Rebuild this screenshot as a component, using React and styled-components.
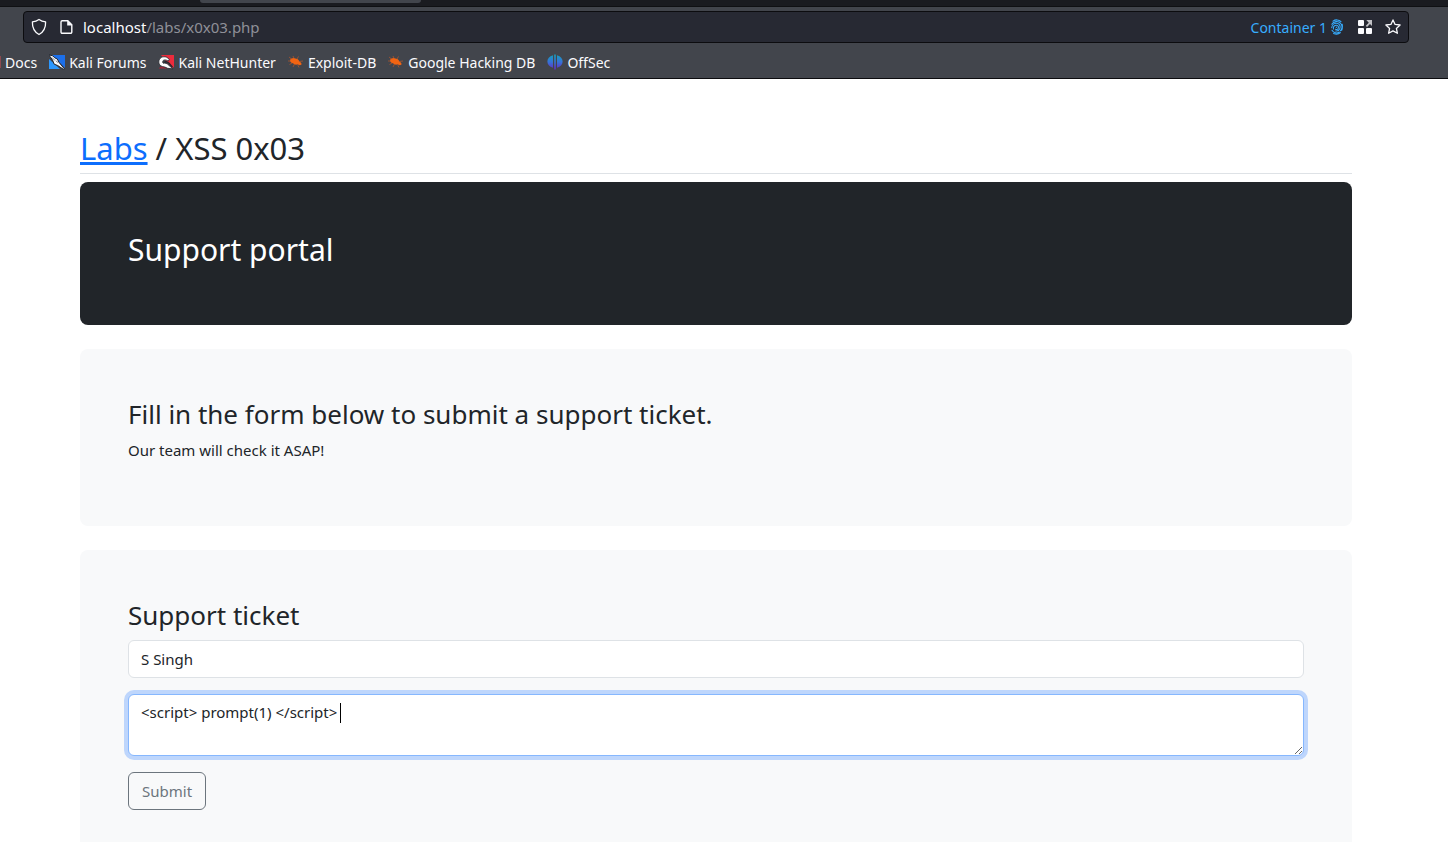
import React from "react";
import styled, { createGlobalStyle } from "styled-components";

const Global = createGlobalStyle`
  *, *::before, *::after { box-sizing: border-box; }
  body {
    margin: 0;
    background: #fff;
    color: #212529;
    font-family: "Noto Sans", "Open Sans", sans-serif;
    font-size: 15px;
    line-height: 23px;
  }
  h1, h2, p { margin: 0; font-weight: 400; }
`;

const Window = styled.div`
  display: flex;
  flex-direction: column;
  height: 100vh;
  overflow: hidden;
`;

const Chrome = styled.header`
  flex: none;
  background: #42454c;
  border-bottom: 1px solid #0c0c0f;
  font-size: 14px;
`;

const TabStrip = styled.div`
  height: 7px;
  padding-left: 200px;
  background: #1a1b20;
  border-bottom: 1px solid #0f1013;
`;

const ActiveTab = styled.div`
  width: 221px;
  height: 3px;
  background: #42454c;
  border-radius: 0 0 4px 4px;
`;

const AddressBar = styled.div`
  display: flex;
  align-items: center;
  height: 32px;
  margin: 4px 39px 4px 23px;
  padding: 0 7px;
  background: #272933;
  border: 1px solid #0c0c0f;
  border-radius: 4px;
`;

const IconGroup = styled.div`
  display: flex;
  align-items: center;
  gap: 12px;
`;

const Address = styled.div`
  flex: 1;
  margin-left: 10px;
  color: #8f9098;
  font-size: 15px;
  white-space: nowrap;
`;

const Host = styled.span`
  color: #fbfbfe;
`;

const IconButton = styled.button`
  display: flex;
  flex: none;
  padding: 0;
  border: 0;
  background: none;
`;

const Container = styled.div`
  display: flex;
  align-items: center;
  gap: 4px;
  margin-right: 14px;
  color: #37adff;
`;

const Bookmarks = styled.nav`
  display: flex;
  align-items: center;
  gap: 12px;
  height: 31px;
  padding-bottom: 1px;
  white-space: nowrap;
`;

const Bookmark = styled.a`
  display: flex;
  align-items: center;
  gap: 4px;
  color: #fbfbfe;
  text-decoration: none;
`;

const DocsMark = styled.span`
  width: 1px;
  height: 12px;
  background: #8c4a50;
`;

const Page = styled.main`
  flex: 1;
  min-height: 0;
  overflow: auto;
  scrollbar-width: none;
  padding: 48px 96px 0 80px;
`;

const Title = styled.h1`
  margin-bottom: 8px;
  padding: 2px 0 6px;
  border-bottom: 1px solid #dee2e6;
  font-size: 31px;
  line-height: 38px;
`;

const LabsLink = styled.a`
  color: #0d6efd;
  text-decoration: underline;
`;

const Panel = styled.section`
  margin-bottom: 24px;
  padding: 48px;
  border-radius: 8px;
  background: ${(p) => (p.$dark ? "#212529" : "#f8f9fa")};
  color: ${(p) => (p.$dark ? "#fff" : "#212529")};
`;

const Heading = styled.h2`
  margin-bottom: 8px;
  font-size: ${(p) => (p.$large ? 30 : 26)}px;
  line-height: ${(p) => (p.$large ? 39 : 34)}px;
`;

const Lead = styled.p`
  margin-bottom: 16px;
`;

const Field = styled.div`
  position: relative;
  margin-bottom: 16px;
`;

const fieldStyle = `
  display: block;
  width: 100%;
  padding: 6px 12px;
  border: 1px solid #dee2e6;
  border-radius: 6px;
  outline: 0;
  background: #fff;
  color: #212529;
  font: inherit;
`;

const TextInput = styled.input`
  ${fieldStyle}
  height: 38px;
`;

const TextArea = styled.textarea`
  ${fieldStyle}
  height: 62px;
  resize: vertical;
  border-color: #86b7fe;
  box-shadow: 0 0 0 4px #bed6fc;
`;

const Caret = styled.span`
  position: absolute;
  top: 9px;
  left: 212px;
  width: 1px;
  height: 20px;
  background: #000;
`;

const Submit = styled.button`
  display: block;
  height: 38px;
  padding: 0 13px;
  border: 1px solid #6c757d;
  border-radius: 6px;
  background: transparent;
  color: #6c757d;
  font: inherit;
`;

const Shield = () => (
  <svg width="16" height="18" viewBox="0 0 16 18" fill="none" stroke="#fbfbfe" strokeWidth="1.3" strokeLinejoin="round">
    <path d="M8 1.500c2 1.400 4.200 2.100 6.600 2.400.2 5.300-1.600 9.700-6.600 12.600C3 13.600 1.200 9.200 1.400 3.900 3.800 3.600 6 2.900 8 1.500z" />
  </svg>
);

const Doc = () => (
  <svg width="14" height="16" viewBox="0 0 14 16">
    <path d="M3.200 1.700h5.600l4 4v7.400a1.200 1.200 0 0 1-1.200 1.200H3.200A1.200 1.200 0 0 1 2 13.100V2.900a1.200 1.200 0 0 1 1.200-1.200z" fill="none" stroke="#fbfbfe" strokeWidth="1.400" />
    <path d="M8.200 1.500v5h5z" fill="#fbfbfe" />
  </svg>
);

const Fingerprint = () => (
  <svg width="12" height="16" viewBox="0 0 12 16" fill="none" stroke="#37adff" strokeWidth="1.050" strokeLinecap="round">
    <path d="M2 2.200C4.400.3 8 .5 10 2.600M.8 5.300C2.500 2.200 7.300 1.600 9.600 4.300c1.800 2.300 1.500 5.500-.2 7.500M.7 8.700C1 5.800 3.400 4 5.800 4.200c3 .3 3.900 3.200 2.900 5.600-.8 1.800-2.200 2.500-4 2.200M2.500 10C1.900 7.800 3.700 6 5.500 6.200c2 .2 2.300 2.200 1.500 3.500-.6 1-1.800 1.100-2.500.5M5.300 8.100v.4M1 11.300c1.500 2.800 5 3.400 7.300 1.700M2.600 14.500c2.300 1.100 5 .8 6.900-.8M11.200 5.200c.4 2 .3 4-.5 6" />
  </svg>
);

const Grid = () => (
  <svg width="16" height="16" viewBox="0 0 16 16" fill="#fbfbfe">
    <rect x="1" y="1" width="6" height="6" rx="1" />
    <rect x="1" y="9" width="6" height="6" rx="1" />
    <rect x="9" y="9" width="6" height="6" rx="1" />
    <path d="M9.300 1H15v6l-2-2-3 3-1.200-1.200 3-3z" fill="#c1c1c5" />
  </svg>
);

const Star = () => (
  <svg width="16" height="16" viewBox="0 0 16 16" fill="none" stroke="#fbfbfe" strokeWidth="1.300" strokeLinejoin="round">
    <path d="M8 .9l2.100 4.500 5 .6-3.700 3.400 1 4.900L8 11.900l-4.400 2.400 1-4.900L.9 6l5-.6z" />
  </svg>
);

const ForumsIcon = () => (
  <svg width="16" height="16" viewBox="0 0 16 16">
    <path d="M0 5l11 10H0z" fill="#2c98ff" />
    <path d="M3 1h13v13z" fill="#1c6fea" />
    <path d="M-.3.8l4 1 2 2 2.600 1.200 1.800 3.500 5 6-.4 1-6-4-3.500-1.300L3.500 6z" fill="#f6f8fb" stroke="#20242c" strokeWidth="1" />
    <path d="M3 3.500l3 3M7 7l2 1.500" stroke="#4a525e" strokeWidth=".7" />
  </svg>
);

const HunterIcon = () => (
  <svg width="16" height="16" viewBox="0 0 16 16">
    <path d="M3 1h13v12l-2 1z" fill="#ec2b3c" />
    <path d="M1 14l3-2 6 2.500H1z" fill="#a5263a" />
    <path d="M.8 8C1 3.500 5 1.800 8.800 3.300l2.500 2-1 1.700C7.500 5.300 4.700 5.500 4.700 8c0 1.300 1 1.700 2 1l2.500.8 5.500 5-5-.5-3-1.300C3 12.700.8 11 .8 8z" fill="#fff" stroke="#25262d" strokeWidth=".8" />
    <path d="M6.500 8.500c1.500-1.500 3.200-.5 4.500.8l3.500 4" fill="none" stroke="#25262d" strokeWidth="1.300" />
  </svg>
);

const BugIcon = () => (
  <svg width="16" height="16" viewBox="0 0 16 16">
    <path d="M2 6.500C2.600 4 6 3.500 8 4.800c2 .2 3 1.500 3.300 2.700 1.800.7 2.700 2.200 2 3.300-1.300.8-3 .2-3.800-.5-1.500.8-3.500 0-4.500-1C3.300 9 2 8 2 6.500z" fill="#f26412" />
    <path d="M3.500 5L1 3M6 4.500L5 2M9 5l1.500-2.500M11 7.500l4-.5M2.500 7H0M4 9l-2.500 1.500M6.500 10L5 13M9.500 10.500l1.500 3" fill="none" stroke="#b95829" strokeWidth=".7" />
  </svg>
);

const OffSecIcon = () => (
  <svg width="16" height="16" viewBox="0 0 16 16">
    <defs>
      <linearGradient id="offsec" gradientUnits="userSpaceOnUse" x1="0" y1="0" x2="0" y2="16">
        <stop offset="0" stopColor="#13a4b8" />
        <stop offset=".5" stopColor="#3672d8" />
        <stop offset="1" stopColor="#6726c4" />
      </linearGradient>
    </defs>
    <path d="M6 1.200v12.600C-1.500 12-1.500 3 6 1.200zM7.200.5h1.600v15H7.200zM10 1.200c7.500 1.800 7.500 10.800 0 12.600z" fill="url(#offsec)" />
  </svg>
);

const bookmarks = [
  { label: "Kali Forums", Icon: ForumsIcon },
  { label: "Kali NetHunter", Icon: HunterIcon },
  { label: "Exploit-DB", Icon: BugIcon },
  { label: "Google Hacking DB", Icon: BugIcon },
  { label: "OffSec", Icon: OffSecIcon },
];

export default function App() {
  return (
    <Window>
      <Global />
      <Chrome>
        <TabStrip><ActiveTab /></TabStrip>
        <AddressBar>
          <IconGroup>
            <IconButton aria-label="Tracking protection"><Shield /></IconButton>
            <IconButton aria-label="Site information"><Doc /></IconButton>
          </IconGroup>
          <Address><Host>localhost</Host>/labs/x0x03.php</Address>
          <Container>Container 1 <Fingerprint /></Container>
          <IconGroup>
            <IconButton aria-label="Extensions"><Grid /></IconButton>
            <IconButton aria-label="Bookmark this page"><Star /></IconButton>
          </IconGroup>
        </AddressBar>
        <Bookmarks aria-label="Bookmarks">
          <Bookmark href="#"><DocsMark />Docs</Bookmark>
          {bookmarks.map(({ label, Icon }) => (
            <Bookmark href="#" key={label}><Icon />{label}</Bookmark>
          ))}
        </Bookmarks>
      </Chrome>
      <Page>
        <Title><LabsLink href="#">Labs</LabsLink> / XSS 0x03</Title>
        <Panel $dark>
          <Heading $large>Support portal</Heading>
        </Panel>
        <Panel>
          <Heading>Fill in the form below to submit a support ticket.</Heading>
          <Lead>Our team will check it ASAP!</Lead>
        </Panel>
        <Panel>
          <Heading>Support ticket</Heading>
          <form onSubmit={(e) => e.preventDefault()}>
            <Field>
              <TextInput aria-label="Name" defaultValue="S Singh" />
            </Field>
            <Field>
              <TextArea aria-label="Message" defaultValue="<script> prompt(1) </script>" />
              <Caret />
            </Field>
            <Submit type="submit">Submit</Submit>
          </form>
        </Panel>
      </Page>
    </Window>
  );
}
